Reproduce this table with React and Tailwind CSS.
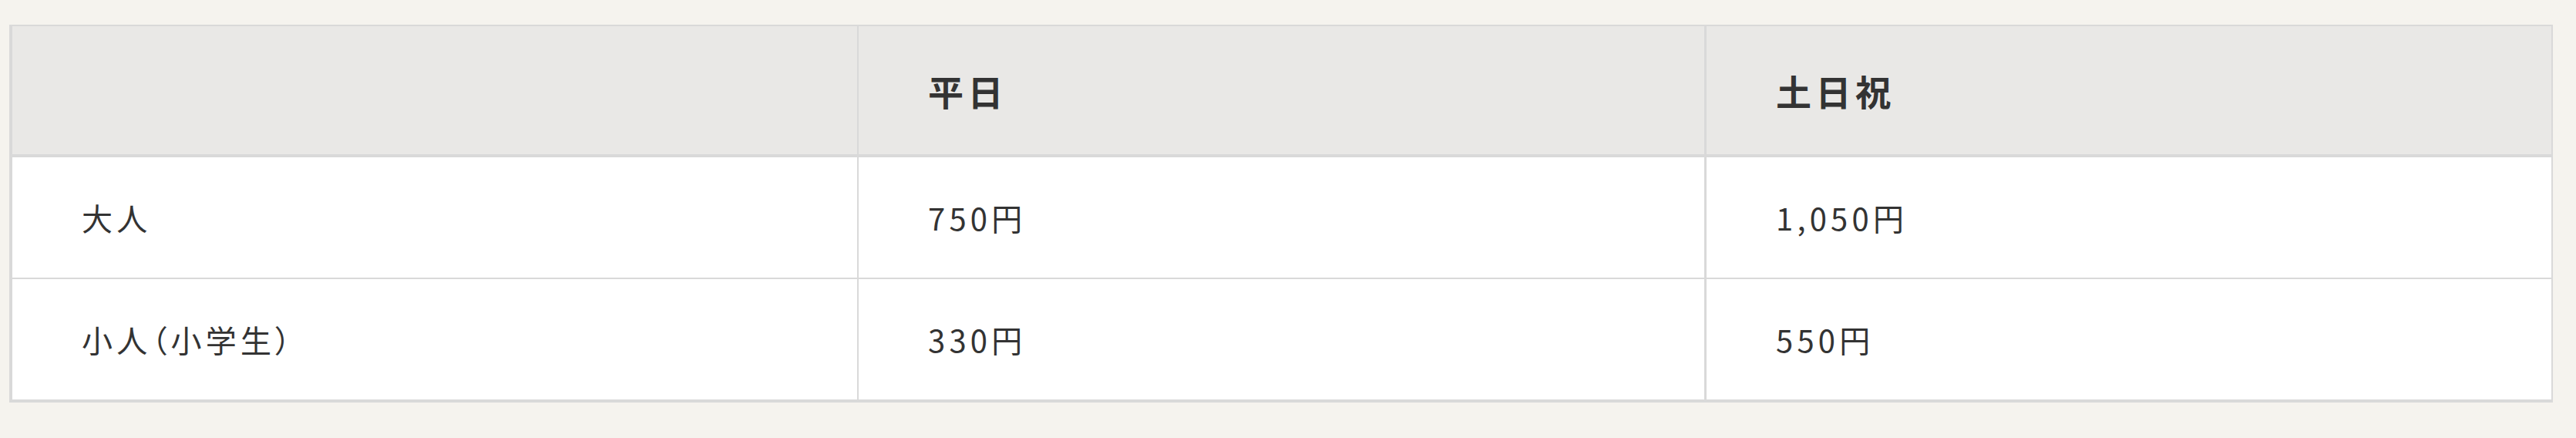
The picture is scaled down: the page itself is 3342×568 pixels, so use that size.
export default function App() {
  const font = { fontFamily: '"Noto Sans CJK JP", "Noto Sans", sans-serif' };
  const rows = [
    ["大人", "750円", "1,050円"],
    ["小人（小学生）", "330円", "550円"],
  ];
  return (
    <div className="w-[3342px] h-[568px] overflow-hidden bg-[#f5f3ee] pt-[32px] pl-[12px]" style={font}>
      <div className="w-[3300px] border-t-2 border-l-4 border-r-2 border-b-4 border-[#d9d9d9] text-[#333333]">
        <div className="flex h-[170px] bg-[#e9e8e6] border-b-4 border-[#d9d9d9]">
          <div className="w-[1098px] border-r-2 border-[#d9d9d9]"></div>
          <div className="w-[1100px] border-r-[3px] border-[#d9d9d9] flex items-center pl-[90px] text-[46px] font-bold tracking-[0.12em]">平日</div>
          <div className="flex-1 flex items-center pl-[90px] text-[46px] font-bold tracking-[0.12em]">土日祝</div>
        </div>
        {rows.map((r, i) => (
          <div key={i} className={"flex bg-white " + (i === 0 ? "h-[158px] border-b-2 border-[#d9d9d9]" : "h-[156px]")}>
            <div className="w-[1098px] border-r-2 border-[#d9d9d9] flex items-center pl-[90px] text-[40px] tracking-[0.13em] [font-feature-settings:'palt']">{r[0]}</div>
            <div className="w-[1100px] border-r-[3px] border-[#d9d9d9] flex items-center pl-[90px] text-[40px] tracking-[0.13em]">{r[1]}</div>
            <div className="flex-1 flex items-center pl-[90px] text-[40px] tracking-[0.13em]">{r[2]}</div>
          </div>
        ))}
      </div>
    </div>
  );
}
